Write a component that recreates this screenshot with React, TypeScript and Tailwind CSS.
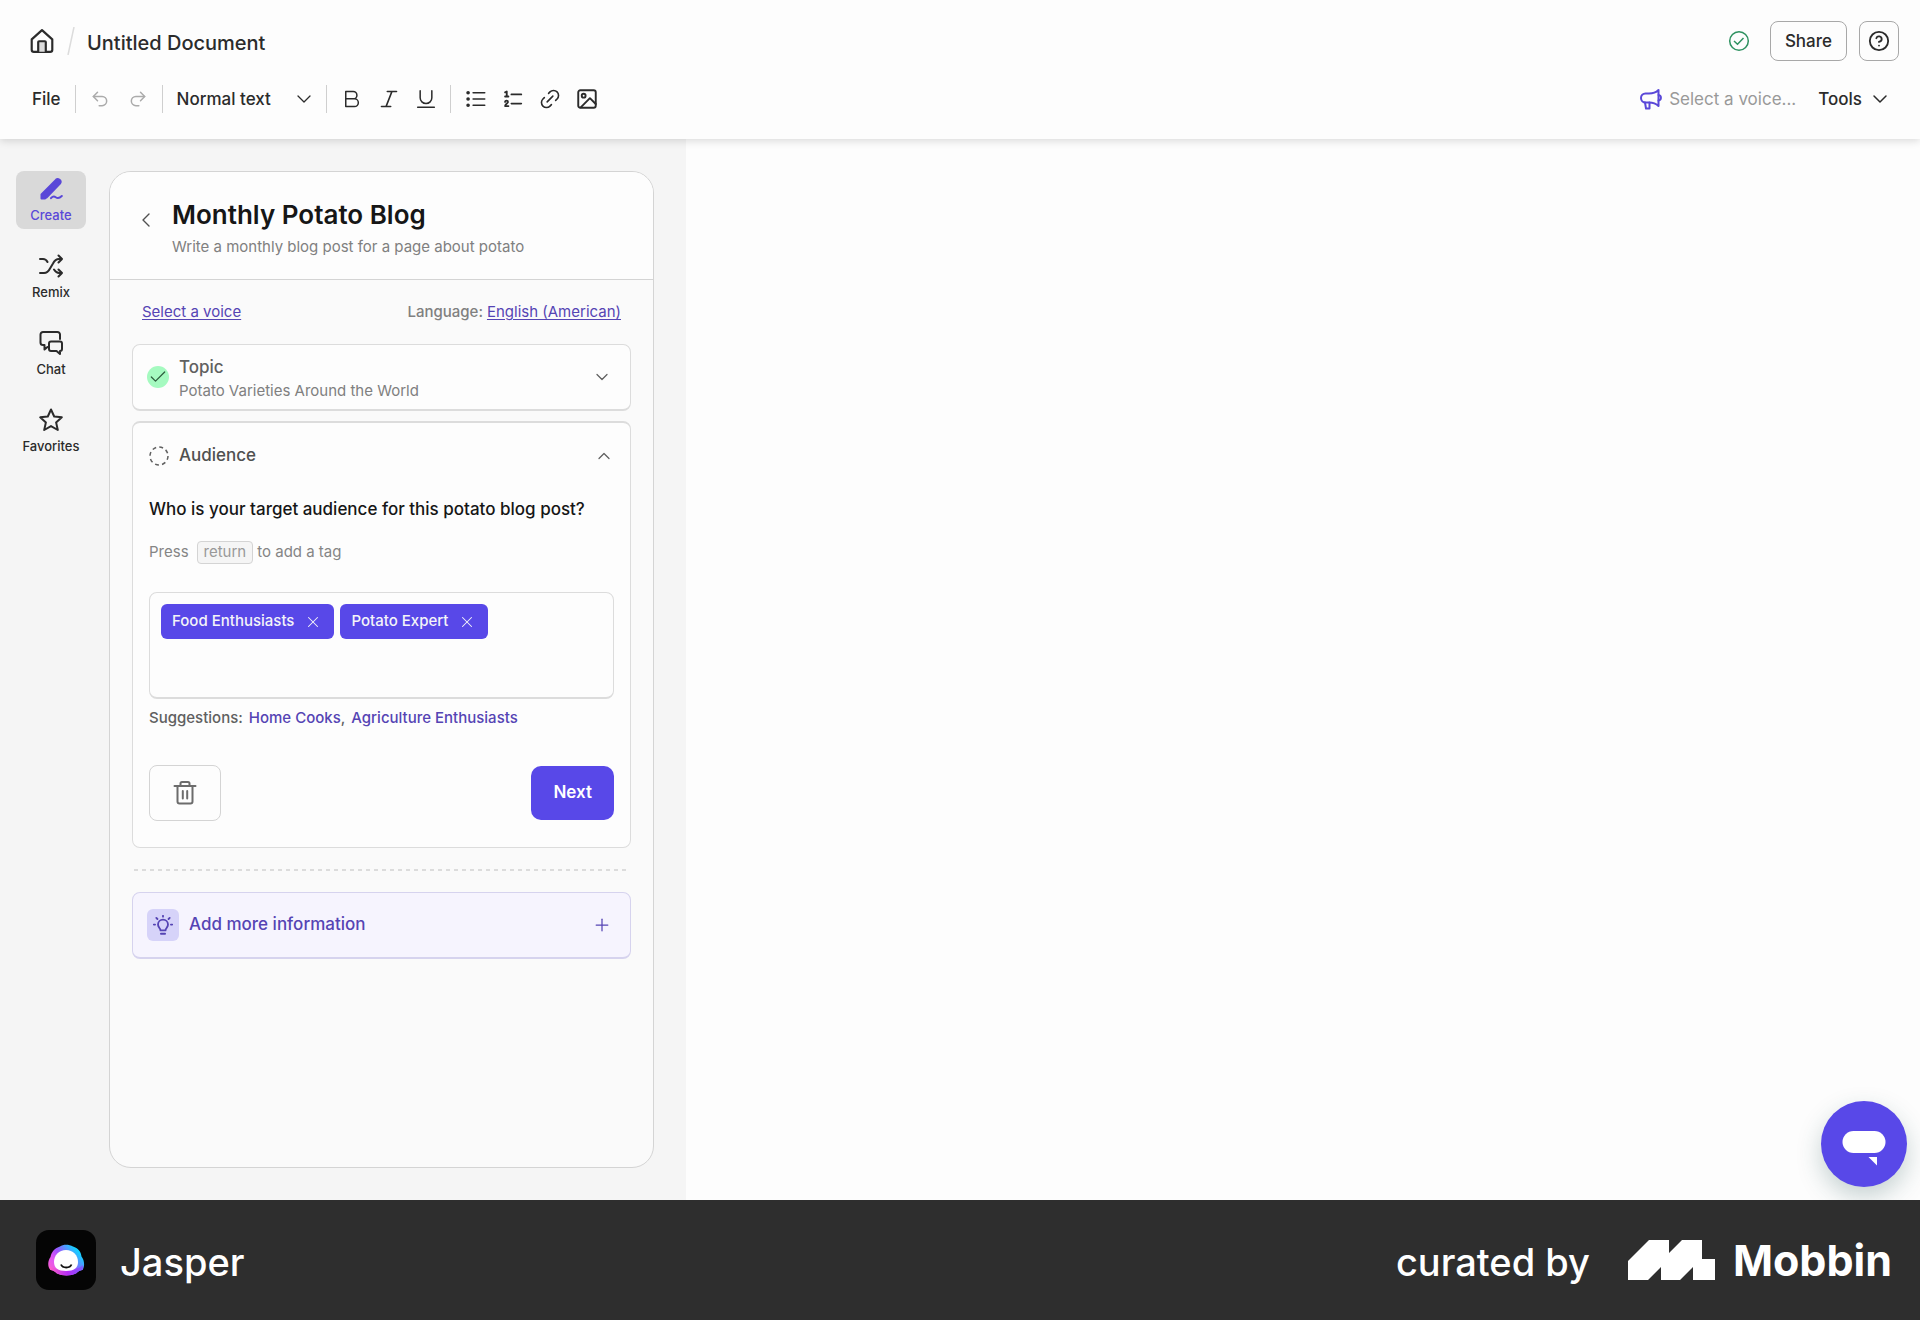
import React from 'react';
import { CheckIcon, ChevronDown, ChevronLeft, ChevronUp, CircleHelp, Link2, Plus, Undo2, Redo2, X } from 'lucide-react';

interface IconProps {
  className?: string;
  children: React.ReactNode;
  strokeWidth?: number;
}

const Icon: React.FC<IconProps> = ({ className = 'size-6', children, strokeWidth = 2 }) => (
  <svg
    viewBox="0 0 24 24"
    className={className}
    fill="none"
    stroke="currentColor"
    strokeWidth={strokeWidth}
    strokeLinecap="round"
    strokeLinejoin="round"
    aria-hidden="true"
  >
    {children}
  </svg>
);

const HomeIcon = () => (
  <Icon className="size-[26px]">
    <path d="M2.500 10.500 12 2l9.500 8.500V20a2 2 0 0 1-2 2h-15a2 2 0 0 1-2-2z" />
    <path d="M8.500 22v-9a.8.8 0 0 1 .8-.8h5.400a.8.8 0 0 1 .8.8v9" fill="#dcdcdc" />
  </Icon>
);

const BoldIcon = () => (
  <Icon className="size-5" strokeWidth={1.8}>
    <path d="M4.500 3v18h10.500a4.500 4.500 0 0 0 0-9.200H4.500M4.500 3h9a4.400 4.400 0 0 1 0 8.800" />
  </Icon>
);

const ItalicIcon = () => (
  <Icon className="size-5">
    <path d="M10 3h11M3 21h11M15.500 3 8.500 21" />
  </Icon>
);

const UnderlineIcon = () => (
  <Icon className="size-5" strokeWidth={1.8}>
    <path d="M5 2v8.500a7 7 0 0 0 14 0V2M2 22h20" />
  </Icon>
);

const BulletsIcon = () => (
  <Icon className="size-5" strokeWidth={1.8}>
    <path d="M8.500 4.500H22.500M8.500 12H22.500M8.500 19.500H22.500" />
    <circle cx="2.500" cy="4.500" r="1.300" fill="currentColor" />
    <circle cx="2.500" cy="12" r="1.300" fill="currentColor" />
    <circle cx="2.500" cy="19.500" r="1.300" fill="currentColor" />
  </Icon>
);

const NumbersIcon = () => (
  <Icon className="size-5">
    <path d="M10 6.500h12M10 17.500h12" />
    <path d="M2.500 4 4.500 3v6M2.500 9h4M2.500 15.500c0-2.200 3.500-2 3.500 0 0 1.500-3.500 2.500-3.500 5H6.500" strokeWidth="2.200" />
  </Icon>
);

const ImageIcon = () => (
  <Icon className="size-5" strokeWidth={2.3}>
    <rect x="1.500" y="1.500" width="21" height="21" rx="2.500" />
    <circle cx="8" cy="8" r="2.300" />
    <path d="m4.500 22 11-11 7 7" />
  </Icon>
);

const MegaphoneIcon = () => (
  <Icon className="size-6">
    <path d="M19.500 3v16C16.500 16 13 15.500 10 15.500H6.500a4.500 4.500 0 0 1 0-9H10c3 0 6.500-.5 9.500-3.500z" />
    <path d="M19.500 8c3.200.5 3.200 5 0 5.500M6 15.500 7 21.500h3.500v-6" />
  </Icon>
);

const CreateIcon = () => (
  <Icon>
    <path d="M2.500 21.500v-4L17.200 2.600c1.800-1.600 5.700 1.200 4 3.600L7.500 20.500l-1.500 1z" fill="currentColor" />
    <path d="M12 21.200c1.900-2.200 3.300-2 4.700-1 1.600 1.200 3.700 1.200 6.100-1.200" />
  </Icon>
);

const RemixIcon = () => (
  <Icon>
    <path d="M1 5h3c2 0 3.500 1 4.500 3M1 19h4c3 0 4.500-1.500 6-4.500l3-5C15.500 6.500 17 5 20 5h3M19.500 1.500 23 5l-3.500 3.500M15 15.500c1.300 2 3 3.500 5 3.500h3M19.500 15.500 23 19l-3.500 3.500" />
  </Icon>
);

const ChatIcon = () => (
  <Icon>
    <path d="M8.500 16 5.500 18.500V14H4a2.500 2.500 0 0 1-2.500-2.500v-8A2.500 2.500 0 0 1 4 1h14.500A2.500 2.500 0 0 1 21 3.500V8" />
    <path d="M12 10.500h9a2 2 0 0 1 2 2v5.500a2 2 0 0 1-2 2v3l-3.500-3H12a2 2 0 0 1-2-2v-5.500a2 2 0 0 1 2-2z" />
  </Icon>
);

const StarIcon = () => (
  <Icon>
    <path d="m12 1.500 3.200 7 7.600.8-5.700 5.100 1.700 7.600L12 18.100 5.200 22l1.700-7.600L1.200 9.300l7.600-.8z" />
  </Icon>
);

const TrashIcon = () => (
  <Icon>
    <path d="M1.500 5h21M4.500 5v15.500a2 2 0 0 0 2 2h11a2 2 0 0 0 2-2V5M7.500 5V2.500A1.500 1.500 0 0 1 9 1h6a1.500 1.500 0 0 1 1.500 1.500V5M9.800 10v7.500M14.200 10v7.500" />
  </Icon>
);

const BulbIcon = () => (
  <Icon className="size-5" strokeWidth={2.2}>
    <path d="M9 18.500c0-2.500-3-3.500-3-7a6 6 0 0 1 12 0c0 3.500-3 4.500-3 7zM9.500 22.500h5M12 1v1M4 3.500l1.300 1.300M20 3.500l-1.300 1.300M1 11.500h1.500M21.500 11.500H23" />
  </Icon>
);

const JasperLogo = () => (
  <svg viewBox="0 0 60 60" className="size-15" role="img" aria-label="Jasper logo">
    <defs>
      <linearGradient id="ring" x1="0" y1="0.900" x2="1" y2="0.150">
        <stop offset="0" stopColor="#ff5fc8" />
        <stop offset="0.300" stopColor="#e055f5" />
        <stop offset="0.500" stopColor="#a050ff" />
        <stop offset="0.850" stopColor="#16ceff" />
      </linearGradient>
      <linearGradient id="chin" x1="0" y1="0" x2="1" y2="0">
        <stop offset="0" stopColor="#ff62c8" />
        <stop offset="0.550" stopColor="#b52cf5" />
        <stop offset="1" stopColor="#7a5cff" />
      </linearGradient>
    </defs>
    <rect width="60" height="60" rx="13" fill="#050505" />
    <path d="M24 16.500c3-2.500 9-2.500 13 0 5 1.500 8 5 8.500 10 3 3.500 3.500 10 1 13.500-2.500.5-4 1-6.500 3.500-5 2.500-14 2.500-19 0-2-2-3.500-3-6.500-3.500-3.500-3-2.500-10 0-13C15.500 21.500 19 18 24 16.500z" fill="url(#ring)" />
    <path d="M13.500 36c3 4 28 6 33-1 .5 2 .5 3.500 0 5-2.500.5-4 1-6.500 3.500-5 2.500-14 2.500-19 0-2-2-3.500-3-6.500-3.500z" fill="url(#chin)" />
    <path d="M30 20c7 0 12 5 12 12 0 6-4 9-12 9s-12-3-12-9c0-7 5-12 12-12z" fill="#fff" />
    <path d="M25 34.500c1.500 4 9 4 10.500 0" fill="none" stroke="#111" strokeWidth="1.800" />
  </svg>
);

const MobbinMark = () => (
  <svg viewBox="0 0 87 40" className="h-10 w-[87px]" fill="#fff" role="img" aria-label="Mobbin logo">
    <path d="M21 0h20v13L54 0h20v19h13v21H65V27L52 40H33V27L20 40H0V21z" />
  </svg>
);

const Divider = () => <span className="h-7 w-px bg-[#cfcfcf]" />;

const navItems = [
  { label: 'Create', icon: <CreateIcon />, active: true },
  { label: 'Remix', icon: <RemixIcon /> },
  { label: 'Chat', icon: <ChatIcon /> },
  { label: 'Favorites', icon: <StarIcon /> },
];

const tags = ['Food Enthusiasts', 'Potato Expert'];

const Header = () => (
  <header className="relative z-10 flex flex-col gap-[17px] bg-[#fdfdfd] pt-5 pr-[21px] pb-5 pl-7 text-[17px] leading-7 text-[#2b2b2b] shadow-[0_2px_8px_rgba(0,0,0,0.14)]">
    <div className="flex h-[42px] items-center">
      <a href="#" className="ml-px" aria-label="Home">
        <HomeIcon />
      </a>
      <svg viewBox="0 0 8 28" className="ml-3 h-7 w-2" stroke="#dcdcdc" strokeWidth="1.500" aria-hidden="true">
        <path d="M7 0 1 28" />
      </svg>
      <h1 className="ml-3 pt-1 text-xl font-medium">Untitled Document</h1>
      <div className="ml-auto flex items-center">
        <svg viewBox="0 0 22 22" className="mr-5 size-[22px]" fill="none" stroke="#2e9160" strokeWidth="1.500" role="img" aria-label="Saved">
          <circle cx="11" cy="11" r="9.300" />
          <path d="m6 11 3.500 3.200L15.500 8" />
        </svg>
        <button className="h-10 rounded-lg border border-[#a8a8a8] px-3.5 font-medium">Share</button>
        <button className="ml-3 flex size-10 items-center justify-center rounded-lg border border-[#a8a8a8]" aria-label="Help">
          <CircleHelp className="size-[22px]" />
        </button>
      </div>
    </div>
    <div className="flex h-10 items-center">
      <button className="mr-3.5 ml-1 font-medium">File</button>
      <Divider />
      <button className="ml-3.5 text-[#ababab]" aria-label="Undo">
        <Undo2 className="size-5" strokeWidth={1.8} />
      </button>
      <button className="mr-3.5 ml-[18px] text-[#ababab]" aria-label="Redo">
        <Redo2 className="size-5" strokeWidth={1.8} />
      </button>
      <Divider />
      <div className="relative mr-2.5 ml-3.5 flex items-center">
        <select className="w-[139px] appearance-none bg-transparent font-medium" aria-label="Text style">
          <option>Normal text</option>
        </select>
        <ChevronDown className="pointer-events-none absolute right-0 size-6" strokeWidth={1.3} />
      </div>
      <Divider />
      <div className="mr-3.5 ml-[15px] flex items-center gap-[17px]">
        <button aria-label="Bold">
          <BoldIcon />
        </button>
        <button aria-label="Italic">
          <ItalicIcon />
        </button>
        <button aria-label="Underline">
          <UnderlineIcon />
        </button>
      </div>
      <Divider />
      <div className="ml-[15px] flex items-center gap-[17px]">
        <button aria-label="Bulleted list">
          <BulletsIcon />
        </button>
        <button aria-label="Numbered list">
          <NumbersIcon />
        </button>
        <button aria-label="Link">
          <Link2 className="-m-0.5 size-6 -rotate-45" strokeWidth={1.6} />
        </button>
        <button aria-label="Image">
          <ImageIcon />
        </button>
      </div>
      <button className="ml-auto flex items-center gap-1.5 text-[#999]">
        <span className="text-[#5a48d8]">
          <MegaphoneIcon />
        </span>
        Select a voice...
      </button>
      <button className="mr-[7px] ml-[22px] flex items-center gap-1.5 font-medium">
        Tools
        <ChevronDown className="size-6" strokeWidth={1.5} />
      </button>
    </div>
  </header>
);

const SideNav = () => (
  <nav className="flex flex-col gap-[19px]">
    {navItems.map((item) => (
      <a
        key={item.label}
        href="#"
        className={`flex h-[58px] w-[70px] flex-col items-center justify-center gap-1.5 rounded-lg text-[13px] leading-4 font-medium ${
          item.active ? 'bg-[#d9d9d9] text-[#5a48d8]' : 'text-[#2b2b2b]'
        }`}
      >
        {item.icon}
        {item.label}
      </a>
    ))}
  </nav>
);

const TopicCard = () => (
  <button className="flex h-[67px] w-full items-center rounded-lg border border-b-2 border-[#dcdcdc] bg-[#fdfdfd] pr-[18px] pl-3.5 text-left">
    <span className="flex size-[22px] items-center justify-center rounded-full bg-[#a5fac0]">
      <CheckIcon className="size-5 text-[#2c5c3c]" strokeWidth={1.5} />
    </span>
    <span className="ml-2.5 flex-1 pt-1 leading-6">
      <span className="block text-[17px] font-medium text-[#606060]">Topic</span>
      <span className="block text-[15px] text-[#808080]">Potato Varieties Around the World</span>
    </span>
    <ChevronDown className="size-5 text-[#606060]" strokeWidth={1.5} />
  </button>
);

const AudienceCard = () => (
  <section className="mt-2.5 rounded-lg border border-t-2 border-[#dcdcdc] bg-[#fdfdfd] px-4 pb-[26px]">
    <button className="flex h-[66px] w-full items-center text-left">
      <svg viewBox="0 0 20 20" className="size-5" fill="none" stroke="#606060" strokeWidth="1.500" aria-hidden="true">
        <circle cx="10" cy="10" r="9" strokeDasharray="3.900 3.170" />
      </svg>
      <span className="ml-2.5 flex-1 text-[17px] font-medium text-[#505050]">Audience</span>
      <ChevronUp className="size-5 text-[#606060]" strokeWidth={1.5} />
    </button>
    <label htmlFor="audience" className="mt-1.5 block text-[17px] leading-7 font-medium text-[#161616]">
      Who is your target audience for this potato blog post?
    </label>
    <p className="mt-[17px] flex items-center text-[15px] leading-6 text-[#858585]">
      Press
      <kbd className="mr-1 ml-2 flex h-[23px] items-center rounded border border-[#d4d4d4] bg-[#f5f5f5] px-1.5 font-[Inter,sans-serif] text-[15px] text-[#999]">return</kbd>
      to add a tag
    </p>
    <div className="mt-7 flex h-[107px] flex-wrap content-start gap-1.5 rounded-lg border border-b-2 border-[#dcdcdc] p-[11px]">
      {tags.map((tag) => (
        <span key={tag} className="flex h-[35px] items-center gap-2.5 rounded-md bg-[#5848e8] pr-3 pl-[11px] text-[15px] font-medium text-[#f4f4f8]">
          {tag}
          <button aria-label={`Remove ${tag}`}>
            <X className="size-[18px]" strokeWidth={1.4} />
          </button>
        </span>
      ))}
      <input id="audience" className="h-[35px] w-20 bg-transparent outline-none" />
    </div>
    <p className="mt-[7px] flex text-[15px] leading-6 font-medium text-[#606060]">
      Suggestions:
      <button className="ml-1.5 text-[#5544b4]">Home Cooks</button>,
      <button className="ml-1.5 text-[#5544b4]">Agriculture Enthusiasts</button>
    </p>
    <div className="mt-[35px] flex items-center justify-between">
      <button className="flex h-14 w-[72px] items-center justify-center rounded-lg border border-[#d4d4d4] text-[#6c6c6c]" aria-label="Delete">
        <TrashIcon />
      </button>
      <button className="h-[54px] rounded-[10px] bg-[#5848e8] px-[22px] text-[17px] font-semibold text-white">Next</button>
    </div>
  </section>
);

const TemplatePanel = () => (
  <section className="flex flex-1 flex-col overflow-hidden rounded-[22px] border border-[#d4d4d4] bg-[#fafafa]">
    <div className="flex h-[108px] items-start border-b border-[#d4d4d4] bg-[#fdfdfd] pt-[25px] pl-6">
      <button className="mt-[11px] text-[#505050]" aria-label="Back">
        <ChevronLeft className="size-6" strokeWidth={1.4} />
      </button>
      <div className="ml-3.5">
        <h2 className="text-[26px] leading-9 font-semibold text-[#161616]">Monthly Potato Blog</h2>
        <p className="text-[15px] leading-7 text-[#808080]">Write a monthly blog post for a page about potato</p>
      </div>
    </div>
    <div className="px-[22px]">
      <div className="flex h-16 items-center justify-between px-2.5 text-[15px] leading-6">
        <a href="#" className="text-[#5544b4] underline underline-offset-2">Select a voice</a>
        <p className="font-medium text-[#808080]">
          Language: <a href="#" className="font-normal text-[#5544b4] underline underline-offset-2">English (American)</a>
        </p>
      </div>
      <TopicCard />
      <AudienceCard />
      <svg className="mt-[21px] block h-0.5 w-full" aria-hidden="true">
        <line x1="2" y1="1" x2="99.500%" y2="1" stroke="#dcdcdc" strokeWidth="2" strokeDasharray="4 4" />
      </svg>
      <button className="mt-[21px] flex h-[67px] w-full items-center rounded-lg border border-b-2 border-[#d6d3ee] bg-[#f6f4fe] pr-[18px] pl-3.5 text-[17px] font-medium text-[#5544b4]">
        <span className="mr-2.5 flex size-8 items-center justify-center rounded-md bg-[#d6d3f9]">
          <BulbIcon />
        </span>
        Add more information
        <Plus className="ml-auto size-5" strokeWidth={1.5} />
      </button>
    </div>
  </section>
);

const Footer = () => (
  <footer className="flex h-[120px] items-center bg-[#2e2e2e] pr-7 pl-9 text-white">
    <JasperLogo />
    <p className="ml-6 pt-1 text-[38px] font-medium">Jasper</p>
    <p className="ml-auto pt-1 text-[38px] font-medium">curated by</p>
    <div className="ml-[38px] flex items-center gap-[18px]">
      <MobbinMark />
      <span className="text-[43px] font-bold">Mobbin</span>
    </div>
  </footer>
);

export default function App() {
  return (
    <div className="flex min-h-screen flex-col bg-[#fdfdfd] font-[Inter,sans-serif]">
      <Header />
      <div className="flex flex-1">
        <aside className="flex w-[686px] gap-[23px] bg-[#f5f5f5] py-8 pr-8 pl-4">
          <SideNav />
          <TemplatePanel />
        </aside>
        <main className="flex flex-1 items-end justify-end overflow-hidden p-[13px]">
          <button className="flex size-[86px] items-center justify-center rounded-full bg-[#5848e8] shadow-[0_10px_24px_rgba(30,80,80,0.25)]" aria-label="Open chat">
            <svg viewBox="0 0 86 86" className="size-full" fill="#fff" aria-hidden="true">
              <rect x="21.500" y="30" width="43" height="22" rx="11" />
              <path d="M47.500 56h8.500v8.500z" />
            </svg>
          </button>
        </main>
      </div>
      <Footer />
    </div>
  );
}
